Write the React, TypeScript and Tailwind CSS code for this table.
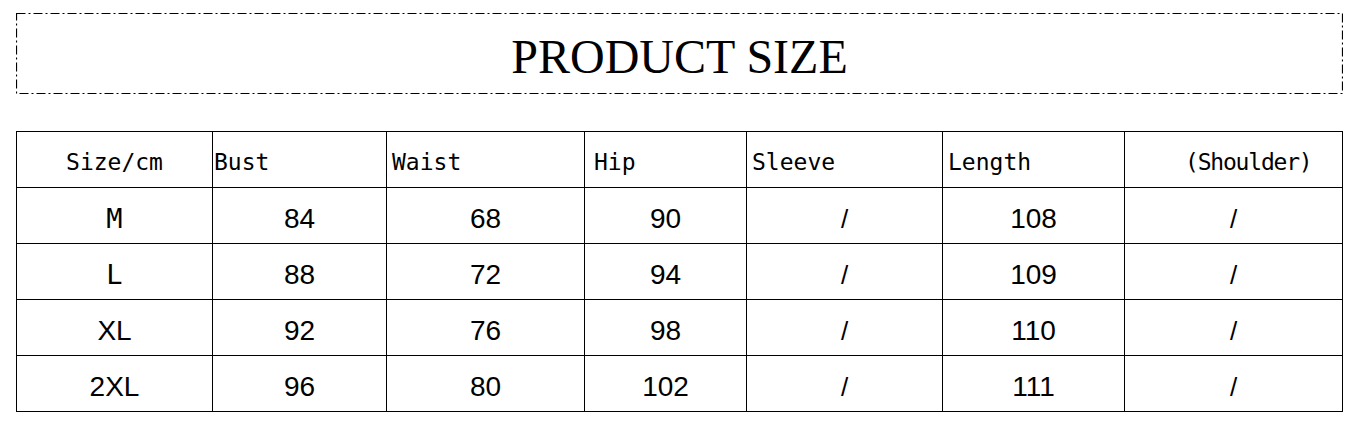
import React from "react";

const cols = [196, 174, 198, 162, 196, 182, 218];

const headers: { text: string; cls: string }[] = [
  { text: "Size/cm", cls: "text-center" },
  { text: "Bust", cls: "text-left pl-[1px]" },
  { text: "Waist", cls: "text-left pl-[5px]" },
  { text: "Hip", cls: "text-left pl-[9px]" },
  { text: "Sleeve", cls: "text-left pl-[5px]" },
  { text: "Length", cls: "text-left pl-[5px]" },
  { text: "(Shoulder)", cls: "text-left pl-[60px] tracking-[-1.2px]" },
];

const rows = [
  ["M", "84", "68", "90", "/", "108", "/"],
  ["L", "88", "72", "94", "/", "109", "/"],
  ["XL", "92", "76", "98", "/", "110", "/"],
  ["2XL", "96", "80", "102", "/", "111", "/"],
];

export default function App() {
  return (
    <div className="w-[1363px] h-[429px] bg-white pt-[13px] pl-[16px] text-black">
      <div className="relative w-[1327px] h-[81px] flex items-center justify-center pt-[6px]">
        <svg
          className="absolute inset-0 pointer-events-none"
          width="1327"
          height="81"
          viewBox="0 0 1327 81"
        >
          <rect
            x="0.5"
            y="0.5"
            width="1326"
            height="80"
            fill="none"
            stroke="#000"
            strokeWidth="1.2"
            strokeDasharray="9 3 2 3"
          />
        </svg>
        <span
          className="text-[48px] leading-none"
          style={{ fontFamily: '"Liberation Serif", "Times New Roman", serif' }}
        >
          PRODUCT SIZE
        </span>
      </div>

      <table className="mt-[37px] border-collapse table-fixed w-[1327px]">
        <colgroup>
          {cols.map((w, i) => (
            <col key={i} style={{ width: `${w}px` }} />
          ))}
        </colgroup>
        <tbody>
          <tr className="h-[56px]">
            {headers.map((h, i) => (
              <td
                key={i}
                className={`border border-black align-middle p-0 pt-[6px] text-[23px] leading-none whitespace-nowrap ${h.cls}`}
                style={{ fontFamily: '"DejaVu Sans Mono", "Liberation Mono", monospace' }}
              >
                {h.text}
              </td>
            ))}
          </tr>
          {rows.map((r, ri) => (
            <tr key={ri} className="h-[56px]">
              {r.map((c, ci) => {
                const isLabelMono = ci === 0 && (c === "M" || c === "L");
                const isSlash = c === "/";
                return (
                  <td
                    key={ci}
                    className={`border border-black align-middle text-center p-0 pt-[6px] leading-none ${
                      isLabelMono ? "text-[27px]" : isSlash ? "text-[26px]" : "text-[28px]"
                    }`}
                    style={{
                      fontFamily: isLabelMono
                        ? '"DejaVu Sans Mono", "Liberation Mono", monospace'
                        : '"Liberation Sans", Arial, sans-serif',
                    }}
                  >
                    {c}
                  </td>
                );
              })}
            </tr>
          ))}
        </tbody>
      </table>
    </div>
  );
}
